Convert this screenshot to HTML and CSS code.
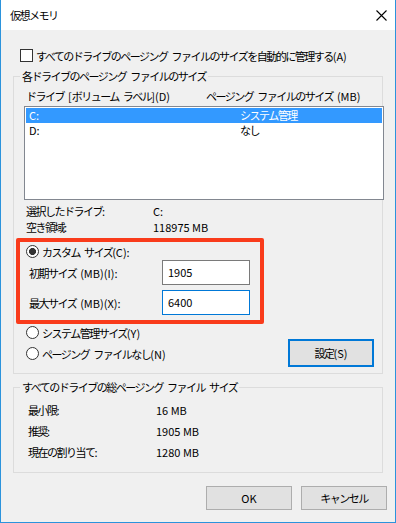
FILE: index.html
```html
<!DOCTYPE html>
<html>
  <head>
    <meta charset="utf-8">
    <title>仮想メモリ</title>
    <link rel="stylesheet" href="styles.css">
  </head>
  <body>
    <div class="window">
      <div class="titlebar">
        <span class="title">仮想メモリ</span>
        <svg class="close" width="11" height="11" viewBox="0 0 11 11">
          <path d="M0.5 0.5 L10.5 10.5 M10.5 0.5 L0.5 10.5" stroke="#000" stroke-width="1.1" fill="none"/>
        </svg>
      </div>

      <div class="content">
        <div class="check-row">
          <span class="checkbox"></span>
          <span>すべてのドライブのページング ファイルのサイズを自動的に管理する<span class="en">(A)</span></span>
        </div>

        <fieldset class="group group-drives">
          <legend>各ドライブのページング ファイルのサイズ</legend>
          <div class="list-head">
            <span class="col-drive">ドライブ <span class="en">[</span>ボリューム ラベル<span class="en">](D)</span></span>
            <span>ページング ファイルのサイズ <span class="en">(MB)</span></span>
          </div>
          <div class="list">
            <div class="list-row selected">
              <span class="col-name en">C:</span>
              <span>システム管理</span>
            </div>
            <div class="list-row">
              <span class="col-name en">D:</span>
              <span>なし</span>
            </div>
          </div>

          <div class="info">
            <div class="info-row">
              <span class="info-label">選択したドライブ:</span>
              <span class="en">C:</span>
            </div>
            <div class="info-row">
              <span class="info-label">空き領域:</span>
              <span class="en">118975 MB</span>
            </div>
          </div>

          <!-- highlighted custom size block -->
          <div class="highlight">
            <div class="radio-row">
              <span class="radio checked"></span>
              <span>カスタム サイズ<span class="en">(C):</span></span>
            </div>
            <div class="field-row first">
              <span class="field-label">初期サイズ <span class="en">(MB)(I):</span></span>
              <div class="textbox en">1905</div>
            </div>
            <div class="field-row">
              <span class="field-label">最大サイズ <span class="en">(MB)(X):</span></span>
              <div class="textbox focused en">6400</div>
            </div>
          </div>

          <div class="options">
            <div class="radios">
              <div class="radio-row">
                <span class="radio"></span>
                <span>システム管理サイズ<span class="en">(Y)</span></span>
              </div>
              <div class="radio-row">
                <span class="radio"></span>
                <span>ページング ファイルなし<span class="en">(N)</span></span>
              </div>
            </div>
            <button class="btn btn-set">設定<span class="en">(S)</span></button>
          </div>
        </fieldset>

        <fieldset class="group group-total">
          <legend>すべてのドライブの総ページング ファイル サイズ</legend>
          <div class="totals">
            <div class="total-row">
              <span class="total-label">最小限:</span>
              <span class="en">16 MB</span>
            </div>
            <div class="total-row">
              <span class="total-label">推奨:</span>
              <span class="en">1905 MB</span>
            </div>
            <div class="total-row">
              <span class="total-label">現在の割り当て:</span>
              <span class="en">1280 MB</span>
            </div>
          </div>
        </fieldset>

        <div class="actions">
          <button class="btn en">OK</button>
          <button class="btn">キャンセル</button>
        </div>
      </div>
    </div>
  </body>
</html>
```

FILE: styles.css
```css
* {
  box-sizing: border-box;
}

body {
  margin: 0;
  font-family: "Noto Sans CJK JP", "Noto Sans", sans-serif;
  font-size: 11px;
  letter-spacing: -1.5px;
  word-spacing: 3px;
  color: #000;
}

.en {
  letter-spacing: 0;
  word-spacing: 0;
}

.window {
  width: 396px;
  height: 523px;
  background-color: #f0f0f0;
  border: 1px solid #2b93dc;
  border-top: none;
  overflow: hidden;
}

/* title bar */
.titlebar {
  height: 30px;
  background-color: #fff;
  display: flex;
  align-items: center;
  justify-content: space-between;
  padding: 0 8px 0 9px;
}

.close {
  display: block;
}

.content {
  padding-top: 19px;
}

.check-row {
  display: flex;
  align-items: center;
  gap: 3px;
  height: 13px;
  padding-left: 19px;
}

.checkbox {
  width: 13px;
  height: 13px;
  border: 1px solid #333;
  background-color: #fff;
  flex-shrink: 0;
}

/* group boxes */
.group {
  margin: 7px 12px 0;
  padding: 0;
  border: 1px solid #dcdcdc;
  min-width: 0;
}

.group legend {
  margin-left: 6px;
  padding: 0 2px;
  line-height: 14px;
  height: 14px;
}

.group-drives {
  padding-bottom: 6px;
}

.group-total {
  margin-top: 6px;
  padding-bottom: 9px;
}

.list-head {
  display: flex;
  margin-top: 6px;
  padding-left: 12px;
  line-height: 14px;
}

.col-drive {
  width: 180px;
}

.list {
  margin: 3px -2px 0 10px;
  height: 94px;
  border: 1px solid #828790;
  background-color: #fff;
  padding: 1px;
}

.list-row {
  display: flex;
  height: 15px;
  line-height: 15px;
  padding-left: 3px;
}

.list-row.selected {
  background-color: #3399ff;
  color: #fff;
}

.col-name {
  width: 211px;
}

.info {
  margin-top: 3px;
}

.info-row {
  display: flex;
  line-height: 16px;
  padding-left: 12px;
}

.info-label {
  width: 127px;
}

/* red highlight */
.highlight {
  margin: 3px 0 0 2px;
  width: 248px;
  height: 86px;
  border: 4px solid #f93b1b;
  border-radius: 2px;
}

.radio-row {
  display: flex;
  align-items: center;
  gap: 3px;
  height: 13px;
}

.highlight .radio-row {
  margin-top: 3px;
  padding-left: 6px;
}

.radio {
  width: 13px;
  height: 13px;
  border: 1px solid #333;
  border-radius: 50%;
  background-color: #fff;
  flex-shrink: 0;
}

.radio.checked {
  background: radial-gradient(circle, #333 0 3.2px, #fff 3.8px);
}

.field-row {
  display: flex;
  align-items: center;
  height: 25px;
  padding-left: 9px;
  margin-top: 5px;
}

.field-row.first {
  margin-top: 2px;
}

.field-label {
  width: 133px;
}

.textbox {
  width: 88px;
  height: 25px;
  border: 1px solid #7a7a7a;
  background-color: #fff;
  padding-left: 5px;
  line-height: 23px;
}

.textbox.focused {
  border-color: #0078d7;
}

.options {
  display: flex;
  justify-content: space-between;
  align-items: flex-start;
  margin-top: 2px;
}

.radios {
  display: flex;
  flex-direction: column;
  gap: 8px;
  padding-left: 12px;
}

/* buttons */
.btn {
  width: 86px;
  height: 24px;
  border: 1px solid #adadad;
  background-color: #e1e1e1;
  font-family: inherit;
  font-size: 11px;
  letter-spacing: -1.5px;
  color: #000;
  padding: 0;
}

.btn.en {
  letter-spacing: 0;
}

.btn-set {
  margin: 13px 8px 0 0;
  height: 28px;
  border: 2px solid #0078d7;
}

.totals {
  margin-top: 6px;
}

.total-row {
  display: flex;
  line-height: 21px;
  padding-left: 14px;
}

.total-label {
  width: 128px;
}

.actions {
  display: flex;
  justify-content: flex-end;
  gap: 9px;
  margin-top: 13px;
  padding-right: 8px;
}
```
